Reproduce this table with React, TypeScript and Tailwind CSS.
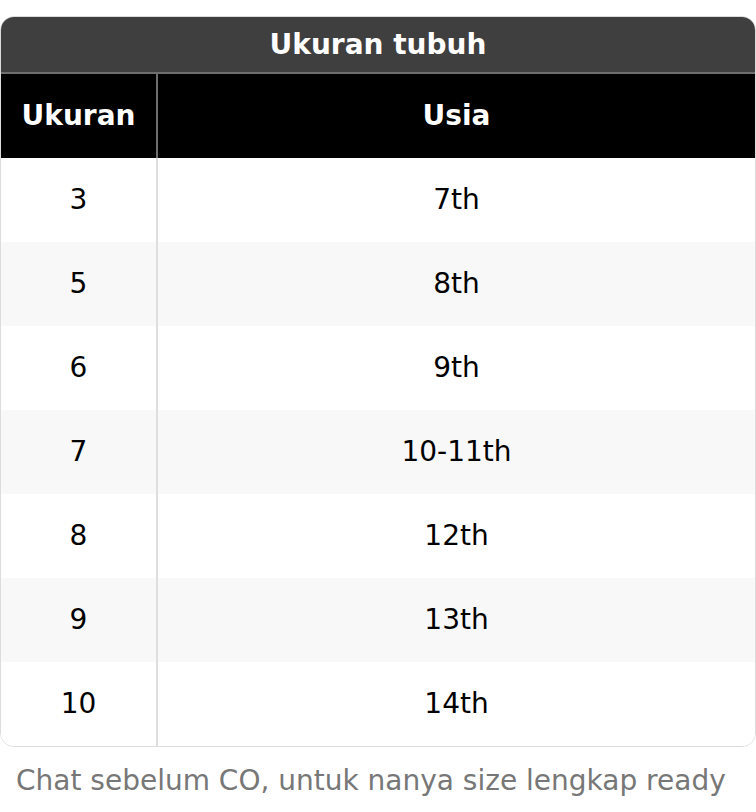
import React from "react";

const rows = [
  ["3", "7th"],
  ["5", "8th"],
  ["6", "9th"],
  ["7", "10-11th"],
  ["8", "12th"],
  ["9", "13th"],
  ["10", "14th"],
];

export default function App() {
  return (
    <main className="w-[756px] bg-white pt-4 font-['DejaVu_Sans',sans-serif] text-[28px] text-black">
      <section className="w-full rounded-[14px] border border-[#dcdcdc] overflow-hidden">
        <header className="h-[55px] bg-[#3f3f3f] flex items-center justify-center font-bold text-white">
          Ukuran tubuh
        </header>

        <div className="grid grid-cols-[157px_1fr] h-[86px] bg-black text-white font-bold border-t-2 border-[#6e6e6e]">
          <div className="flex items-center justify-center border-r-2 border-[#6e6e6e]">Ukuran</div>
          <div className="flex items-center justify-center">Usia</div>
        </div>

        {rows.map(([size, age], i) => (
          <div
            key={size}
            className={
              i % 2 === 1
                ? "grid grid-cols-[157px_1fr] h-[84px] bg-[#f8f8f8]"
                : "grid grid-cols-[157px_1fr] h-[84px] bg-white"
            }
          >
            <div className="flex items-center justify-center border-r-2 border-[#dedede]">{size}</div>
            <div className="flex items-center justify-center">{age}</div>
          </div>
        ))}
      </section>

      <p className="mt-[17px] pl-4 text-[#777777] leading-[34px]">
        Chat sebelum CO, untuk nanya size lengkap ready
      </p>
    </main>
  );
}
